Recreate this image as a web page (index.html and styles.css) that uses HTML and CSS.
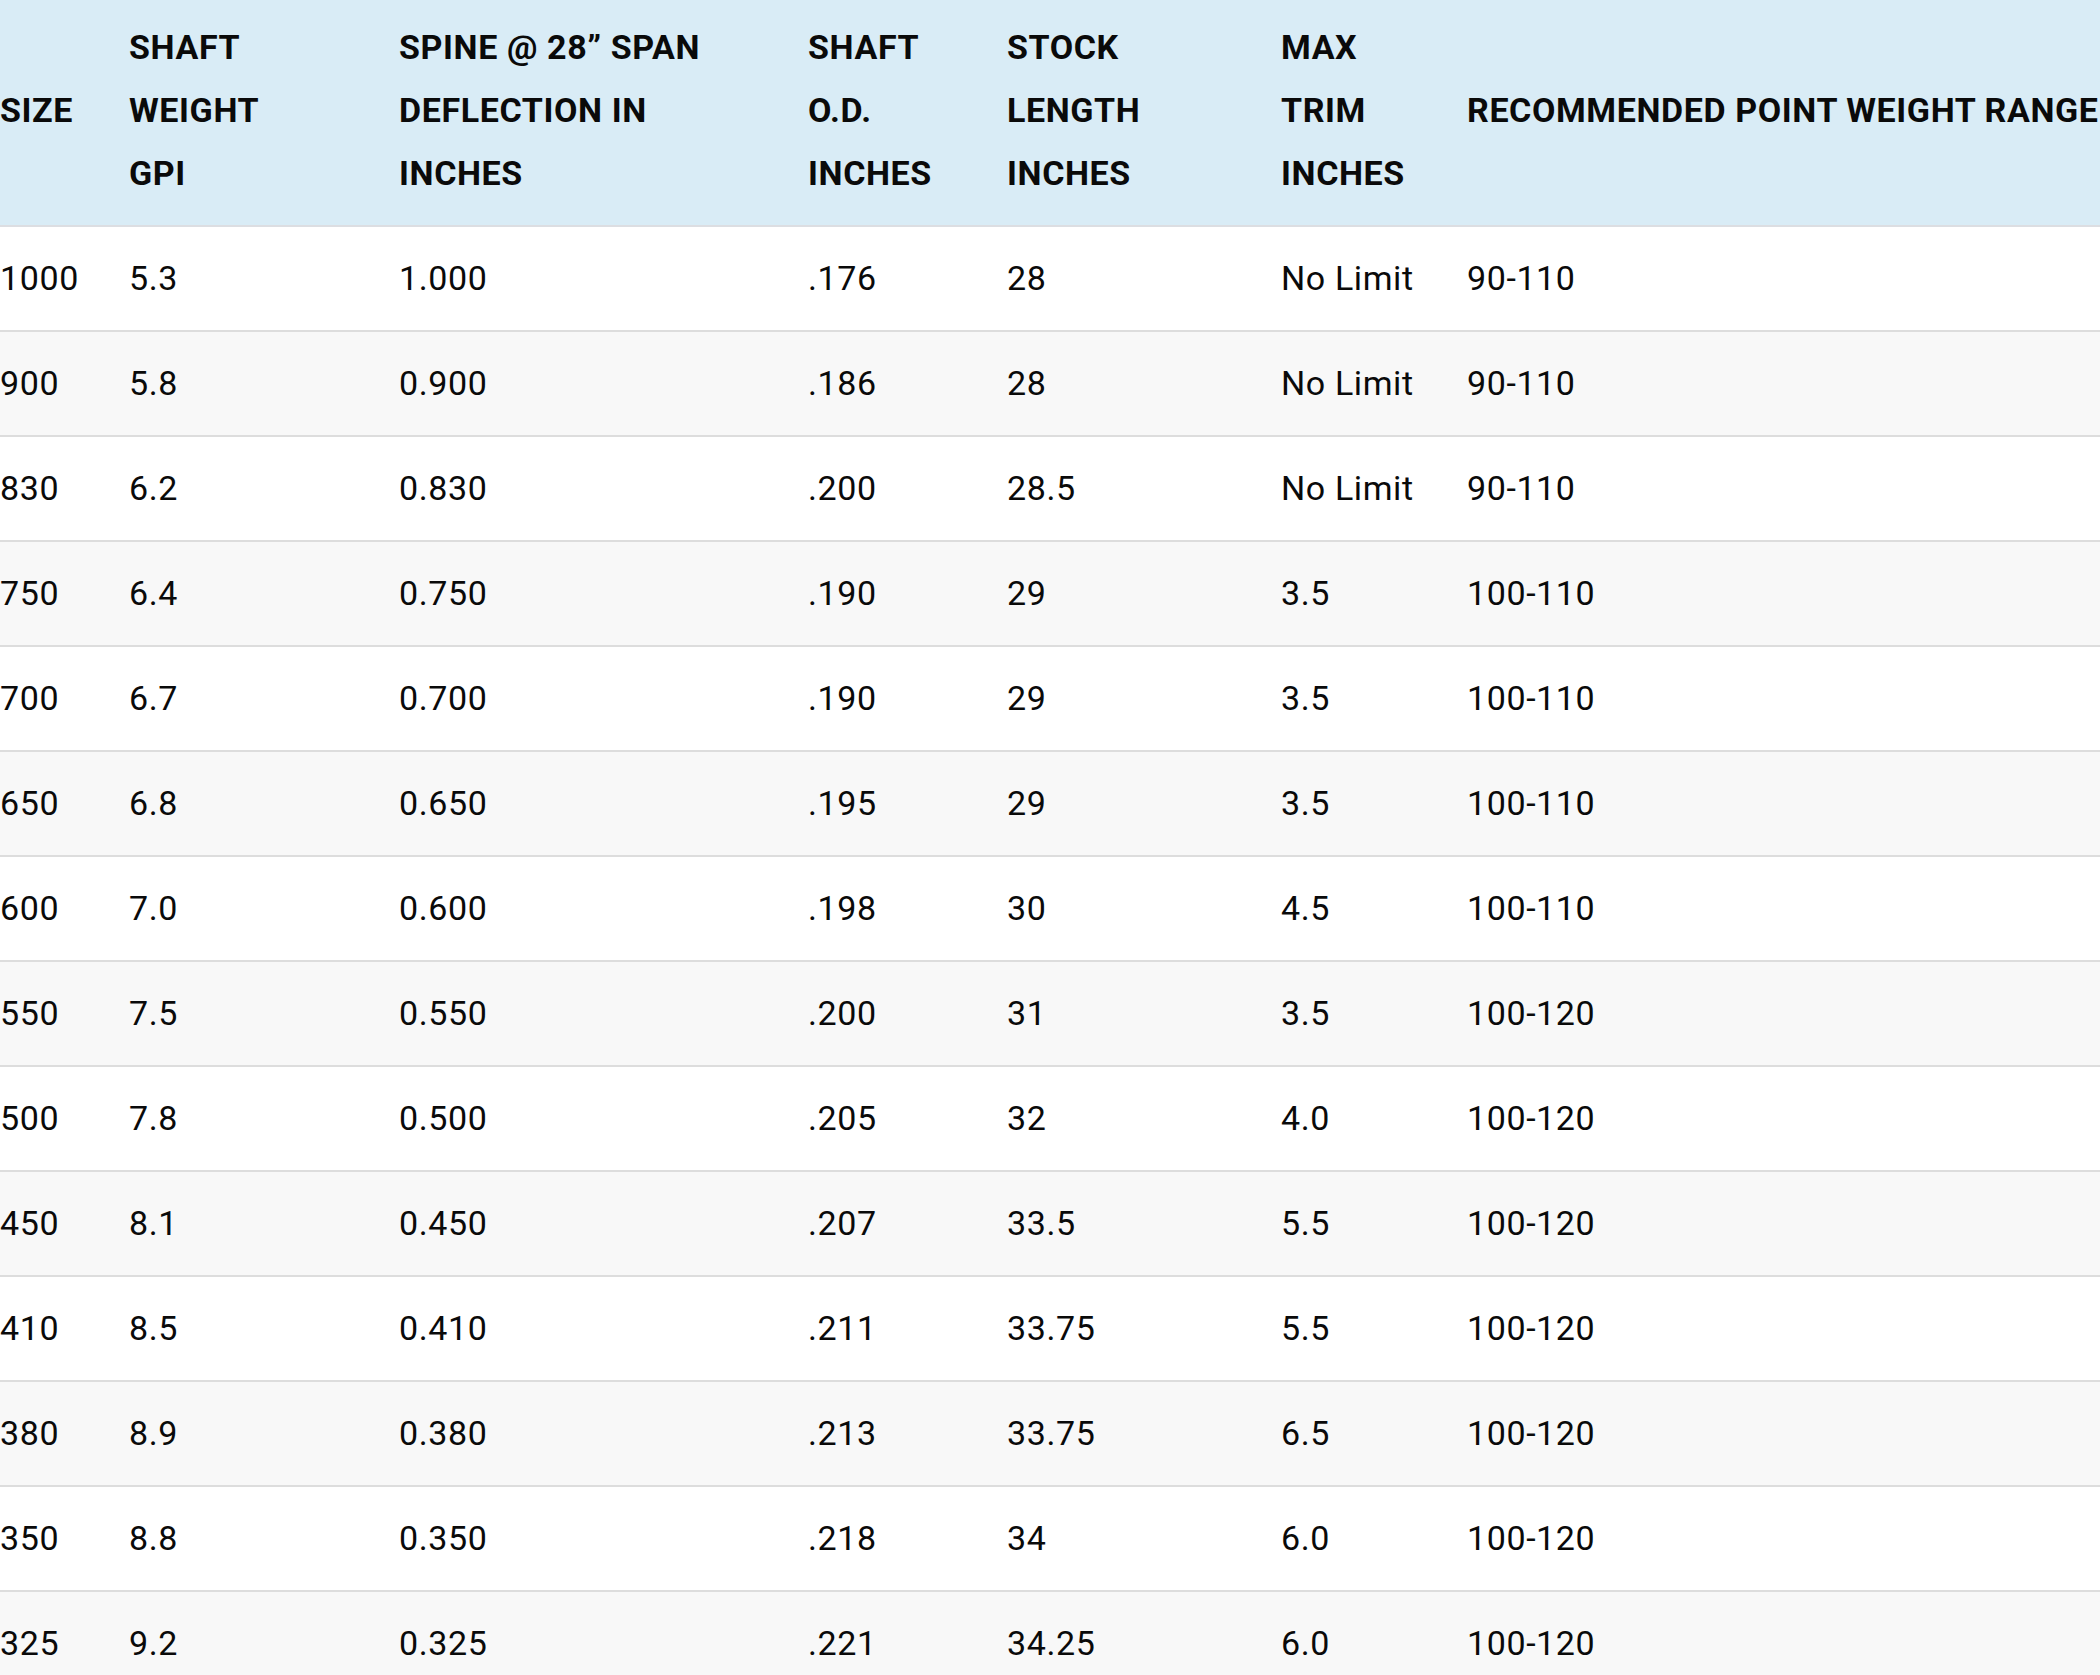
FILE: index.html
```html
<!DOCTYPE html>
<html lang="en">
<head>
<meta charset="utf-8">
<title>Shaft Specifications</title>
<link rel="stylesheet" href="styles.css">
</head>
<body>
<div class="wrap">
<table class="spec">
  <colgroup>
    <col class="c-size">
    <col class="c-gpi">
    <col class="c-spine">
    <col class="c-od">
    <col class="c-len">
    <col class="c-trim">
    <col class="c-point">
  </colgroup>
  <thead>
    <tr>
      <th>SIZE</th>
      <th>SHAFT<br>WEIGHT<br>GPI</th>
      <th>SPINE @ 28” SPAN<br>DEFLECTION IN<br>INCHES</th>
      <th>SHAFT<br>O.D.<br>INCHES</th>
      <th>STOCK<br>LENGTH<br>INCHES</th>
      <th>MAX<br>TRIM<br>INCHES</th>
      <th>RECOMMENDED POINT WEIGHT RANGE</th>
    </tr>
  </thead>
  <tbody>
    <tr><td>1000</td><td>5.3</td><td>1.000</td><td>.176</td><td>28</td><td>No Limit</td><td>90-110</td></tr>
    <tr><td>900</td><td>5.8</td><td>0.900</td><td>.186</td><td>28</td><td>No Limit</td><td>90-110</td></tr>
    <tr><td>830</td><td>6.2</td><td>0.830</td><td>.200</td><td>28.5</td><td>No Limit</td><td>90-110</td></tr>
    <tr><td>750</td><td>6.4</td><td>0.750</td><td>.190</td><td>29</td><td>3.5</td><td>100-110</td></tr>
    <tr><td>700</td><td>6.7</td><td>0.700</td><td>.190</td><td>29</td><td>3.5</td><td>100-110</td></tr>
    <tr><td>650</td><td>6.8</td><td>0.650</td><td>.195</td><td>29</td><td>3.5</td><td>100-110</td></tr>
    <tr><td>600</td><td>7.0</td><td>0.600</td><td>.198</td><td>30</td><td>4.5</td><td>100-110</td></tr>
    <tr><td>550</td><td>7.5</td><td>0.550</td><td>.200</td><td>31</td><td>3.5</td><td>100-120</td></tr>
    <tr><td>500</td><td>7.8</td><td>0.500</td><td>.205</td><td>32</td><td>4.0</td><td>100-120</td></tr>
    <tr><td>450</td><td>8.1</td><td>0.450</td><td>.207</td><td>33.5</td><td>5.5</td><td>100-120</td></tr>
    <tr><td>410</td><td>8.5</td><td>0.410</td><td>.211</td><td>33.75</td><td>5.5</td><td>100-120</td></tr>
    <tr><td>380</td><td>8.9</td><td>0.380</td><td>.213</td><td>33.75</td><td>6.5</td><td>100-120</td></tr>
    <tr><td>350</td><td>8.8</td><td>0.350</td><td>.218</td><td>34</td><td>6.0</td><td>100-120</td></tr>
    <tr><td>325</td><td>9.2</td><td>0.325</td><td>.221</td><td>34.25</td><td>6.0</td><td>100-120</td></tr>
  </tbody>
</table>
</div>
</body>
</html>
```
FILE: styles.css
```css
html, body {
  margin: 0;
  padding: 0;
  background: #ffffff;
  overflow: hidden;
}
.wrap {
  width: 2100px;
  height: 1675px;
  overflow: hidden;
}
.spec {
  border-collapse: collapse;
  table-layout: fixed;
  width: 2200px;
  margin-left: -10px;
  margin-top: -3px;
  font-family: Roboto, "Liberation Sans", sans-serif;
  font-size: 34px;
  letter-spacing: 0.6px;
  line-height: 63px;
  color: #0a0a0a;
}
.c-size { width: 129px; }
.c-gpi { width: 270px; }
.c-spine { width: 409px; }
.c-od { width: 199px; }
.c-len { width: 274px; }
.c-trim { width: 186px; }
.c-point { width: 733px; }
.spec th {
  background: #d9ecf6;
  font-weight: 700;
  text-align: left;
  vertical-align: middle;
  white-space: nowrap;
  padding: 19px 10px 20px;
  border-bottom: 2px solid #dcdee2;
}
.spec td {
  font-weight: 400;
  text-align: left;
  white-space: nowrap;
  padding: 20px 10px;
  border-bottom: 2px solid #dddddd;
}
.spec tbody tr:nth-child(odd) td {
  background: #ffffff;
}
.spec tbody tr:nth-child(even) td {
  background: #f8f8f8;
}
```
